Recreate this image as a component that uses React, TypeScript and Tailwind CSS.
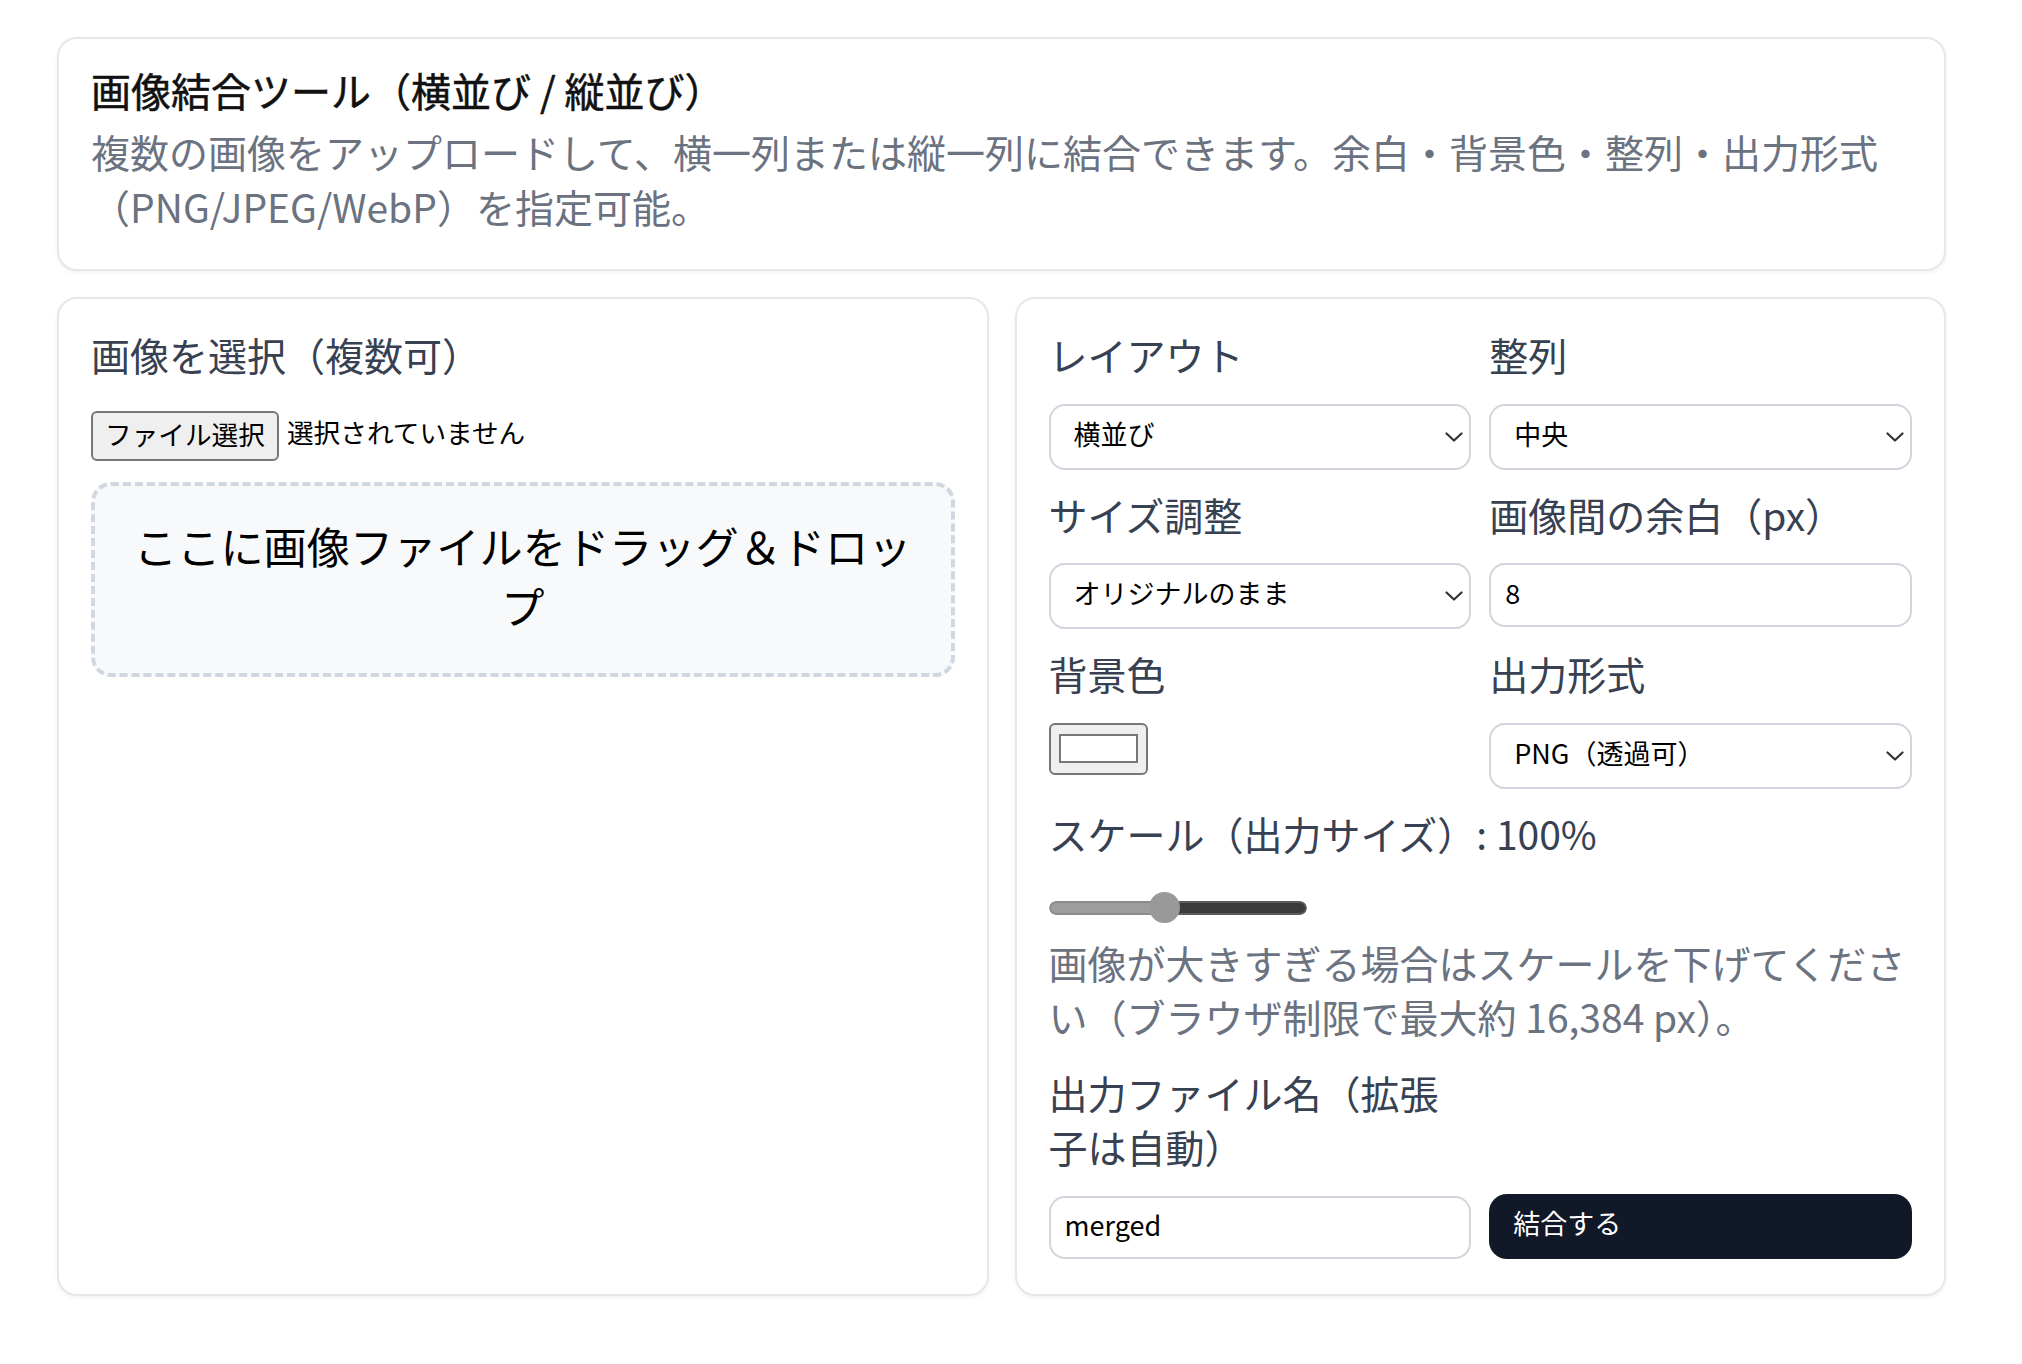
import React from 'react';

// Noto CJK sits a little lower than the original font; lift text by 4px without changing its box
const lift = '-mt-[4px] pb-[4px]';

const Chevron = () => (
  <svg
    className="pointer-events-none absolute right-[8px] top-1/2 -translate-y-1/2"
    width="18"
    height="10"
    viewBox="0 0 18 10"
    fill="none"
  >
    <path d="M1.5 1.5 L9 8.5 L16.5 1.5" stroke="#333" strokeWidth="2.2" strokeLinecap="round" strokeLinejoin="round" />
  </svg>
);

const Select: React.FC<{ value: string; options: string[] }> = ({ value, options }) => (
  <div className="relative">
    <select
      defaultValue={value}
      className="h-[66px] w-full appearance-none rounded-[16px] border-2 border-[#d1d5db] bg-white pb-[6px] pl-[23px] pr-[40px] text-[27px] text-black outline-none"
    >
      {options.map((o) => (
        <option key={o}>{o}</option>
      ))}
    </select>
    <Chevron />
  </div>
);

const Field: React.FC<{ label: string; children: React.ReactNode }> = ({ label, children }) => (
  <div className="flex flex-col gap-[18px]">
    <label className={`${lift} text-[39px] leading-[1.4] text-[#374151]`}>{label}</label>
    {children}
  </div>
);

export default function App() {
  return (
    <div className="min-h-screen bg-white font-['Noto_Sans_CJK_JP','Noto_Sans',sans-serif]">
      <div className="ml-[57px] flex w-[1889px] flex-col gap-[26px] pt-[37px]">
        {/* ヘッダー */}
        <header className="rounded-[20px] border-2 border-[#e5e7eb] bg-white px-[32px] pt-[23px] pb-[36px] shadow-[0_2px_4px_rgba(0,0,0,0.05)]">
          <h1 className="text-[40px] leading-[56px] font-normal text-[#111] [-webkit-text-stroke:0.5px_#111]">
            画像結合ツール（横並び / 縦並び）
          </h1>
          <p className="mt-[6px] text-[39px] leading-[1.4] text-[#6b7280]">
            複数の画像をアップロードして、横一列または縦一列に結合できます。余白・背景色・整列・出力形式（PNG/JPEG/WebP）を指定可能。
          </p>
        </header>

        <div className="grid grid-cols-2 gap-[26px]">
          {/* 左：画像選択 */}
          <section className="rounded-[20px] border-2 border-[#e5e7eb] bg-white p-[32px] shadow-[0_2px_4px_rgba(0,0,0,0.05)]">
            <label className={`${lift} block text-[39px] leading-[1.4] text-[#374151]`}>画像を選択（複数可）</label>
            <div className="mt-[25px] flex items-center gap-[8px]">
              <button className="h-[50px] rounded-[6px] border-2 border-[#767676] bg-[#efefef] px-[12px] pb-[4px] text-[26.67px] text-black">
                ファイル選択
              </button>
              <span className={`${lift} text-[26.67px] text-black`}>選択されていません</span>
            </div>
            <div className="mt-[21px] flex h-[195px] items-center justify-center rounded-[20px] border-4 border-dashed border-[#d0d7e1] bg-[#f8f9fb] px-[32px] pb-[8px] text-center text-[43.2px] leading-[1.4] text-black">
              ここに画像ファイルをドラッグ＆ドロップ
            </div>
          </section>

          {/* 右：設定 */}
          <section className="rounded-[20px] border-2 border-[#e5e7eb] bg-white px-[32px] pt-[32px] pb-[35px] shadow-[0_2px_4px_rgba(0,0,0,0.05)]">
            <div className="grid grid-cols-2 gap-x-[18px] gap-y-[21px]">
              <Field label="レイアウト">
                <Select value="横並び" options={['横並び', '縦並び']} />
              </Field>
              <Field label="整列">
                <Select value="中央" options={['上/左', '中央', '下/右']} />
              </Field>
              <Field label="サイズ調整">
                <Select value="オリジナルのまま" options={['オリジナルのまま', '高さを揃える', '幅を揃える']} />
              </Field>
              <Field label="画像間の余白（px）">
                <input
                  defaultValue="8"
                  className="h-[64px] w-full rounded-[16px] border-2 border-[#d1d5db] bg-white px-[14px] pb-[6px] text-[27px] text-black outline-none"
                />
              </Field>
              <Field label="背景色">
                <div className="flex h-[52px] w-[99px] items-center justify-center rounded-[6px] border-2 border-[#767676] bg-[#efefef]">
                  <div className="h-[29px] w-[79px] border-2 border-[#777] bg-white" />
                </div>
              </Field>
              <Field label="出力形式">
                <Select value="PNG（透過可）" options={['PNG（透過可）', 'JPEG', 'WebP']} />
              </Field>

              <div className="col-span-2 flex flex-col">
                <label className={`${lift} text-[39px] leading-[1.4] text-[#374151]`}>スケール（出力サイズ）: 100%</label>
                <div className="relative mt-[27px] h-[31px] w-[258px]">
                  <div className="absolute top-[9px] left-0 flex h-[14px] w-full overflow-hidden rounded-full">
                    <div className="h-full w-[116px] rounded-l-full border-2 border-r-0 border-[#8c8c8c] bg-[#9d9d9d]" />
                    <div className="h-full flex-1 rounded-r-full border-2 border-l-0 border-[#5c5c5c] bg-[#3b3b3b]" />
                  </div>
                  <div className="absolute top-0 left-[100px] h-[31px] w-[31px] rounded-full bg-[#999]" />
                </div>
                <p className="mt-[12px] pb-[4px] text-[39px] leading-[1.4] text-[#6b7280]">
                  画像が大きすぎる場合はスケールを下げてください（ブラウザ制限で最大約 16,384 px）。
                </p>
              </div>

              <Field label="出力ファイル名（拡張子は自動）">
                <input
                  defaultValue="merged"
                  className="h-[63px] w-full rounded-[16px] border-2 border-[#d1d5db] bg-white px-[14px] pb-[6px] text-[27px] text-black outline-none"
                />
              </Field>
              <div className="flex items-end">
                <button className="h-[65px] w-full rounded-[18px] bg-[#111827] px-[24px] pb-[6px] text-left text-[27px] text-white">
                  結合する
                </button>
              </div>
            </div>
          </section>
        </div>
      </div>
    </div>
  );
}
